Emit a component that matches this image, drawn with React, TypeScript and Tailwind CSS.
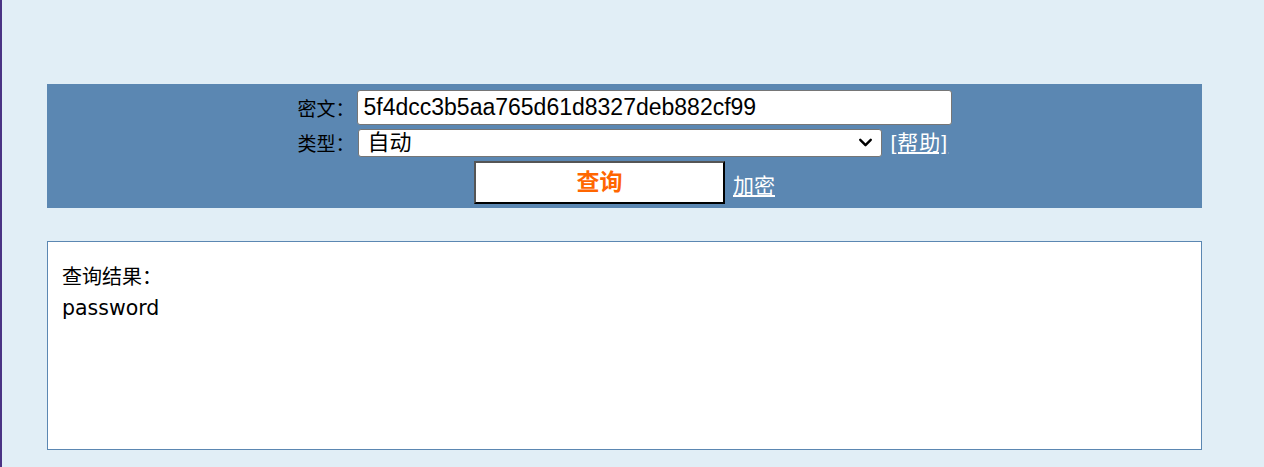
import { ChevronDown } from "lucide-react";

const cjk = "font-['Liberation_Sans','Noto_Sans_CJK_SC',sans-serif]";

export default function App() {
  return (
    <div className="min-h-[467px] border-l-2 border-[#4a3384] bg-[#e1eef6] pt-[84px] pb-4">
      <div className={`ml-[45px] h-[124px] w-[1155px] bg-[#5b87b2] pt-[6px] ${cjk}`}>
        <div className="mx-auto grid w-[654px] grid-cols-[59px_595px] items-center gap-y-[2px]">
          <label className="font-['Noto_Sans_CJK_SC',sans-serif] text-[19px] leading-none whitespace-nowrap text-black">
            密文：
          </label>
          <input
            defaultValue="5f4dcc3b5aa765d61d8327deb882cf99"
            className="h-[35px] w-[595px] rounded-[3px] border border-[#767676] bg-white px-[6px] text-[23px] text-black outline-none"
          />
          <label className="font-['Noto_Sans_CJK_SC',sans-serif] text-[19px] leading-none whitespace-nowrap text-black">
            类型：
          </label>
          <div className="flex items-center gap-[9px] pl-px">
            <div className="flex h-[28px] w-[524px] items-center justify-between rounded-[3px] border border-[#767676] bg-white pr-[5px] pl-[9px] text-[22px] text-black">
              <span>自动</span>
              <ChevronDown className="h-[21px] w-[21px]" strokeWidth={2.75} />
            </div>
            <a href="#" className="text-[21px] tracking-[1px] text-white underline underline-offset-2">
              [帮助]
            </a>
          </div>
        </div>
        <div className="mt-[2px] flex items-end justify-center gap-[8px]">
          <button className="h-[43px] w-[251px] border-2 border-t-[#555] border-r-black border-b-black border-l-[#555] bg-white text-[23px] font-bold text-[#ff6600]">
            查询
          </button>
          <a href="#" className="mb-[4px] text-[21px] leading-[28px] text-white underline underline-offset-2">
            加密
          </a>
        </div>
      </div>
      <div className="mt-[33px] ml-[45px] h-[209px] w-[1155px] border border-[#5b87b2] bg-white px-[14px] pt-[19px] font-['DejaVu_Sans','Noto_Sans_CJK_SC',sans-serif] text-black">
        <div className="font-['Noto_Sans_CJK_SC',sans-serif] text-[20px] leading-[30px]">查询结果：</div>
        <div className="text-[20.5px] leading-[35px]">password</div>
      </div>
    </div>
  );
}
